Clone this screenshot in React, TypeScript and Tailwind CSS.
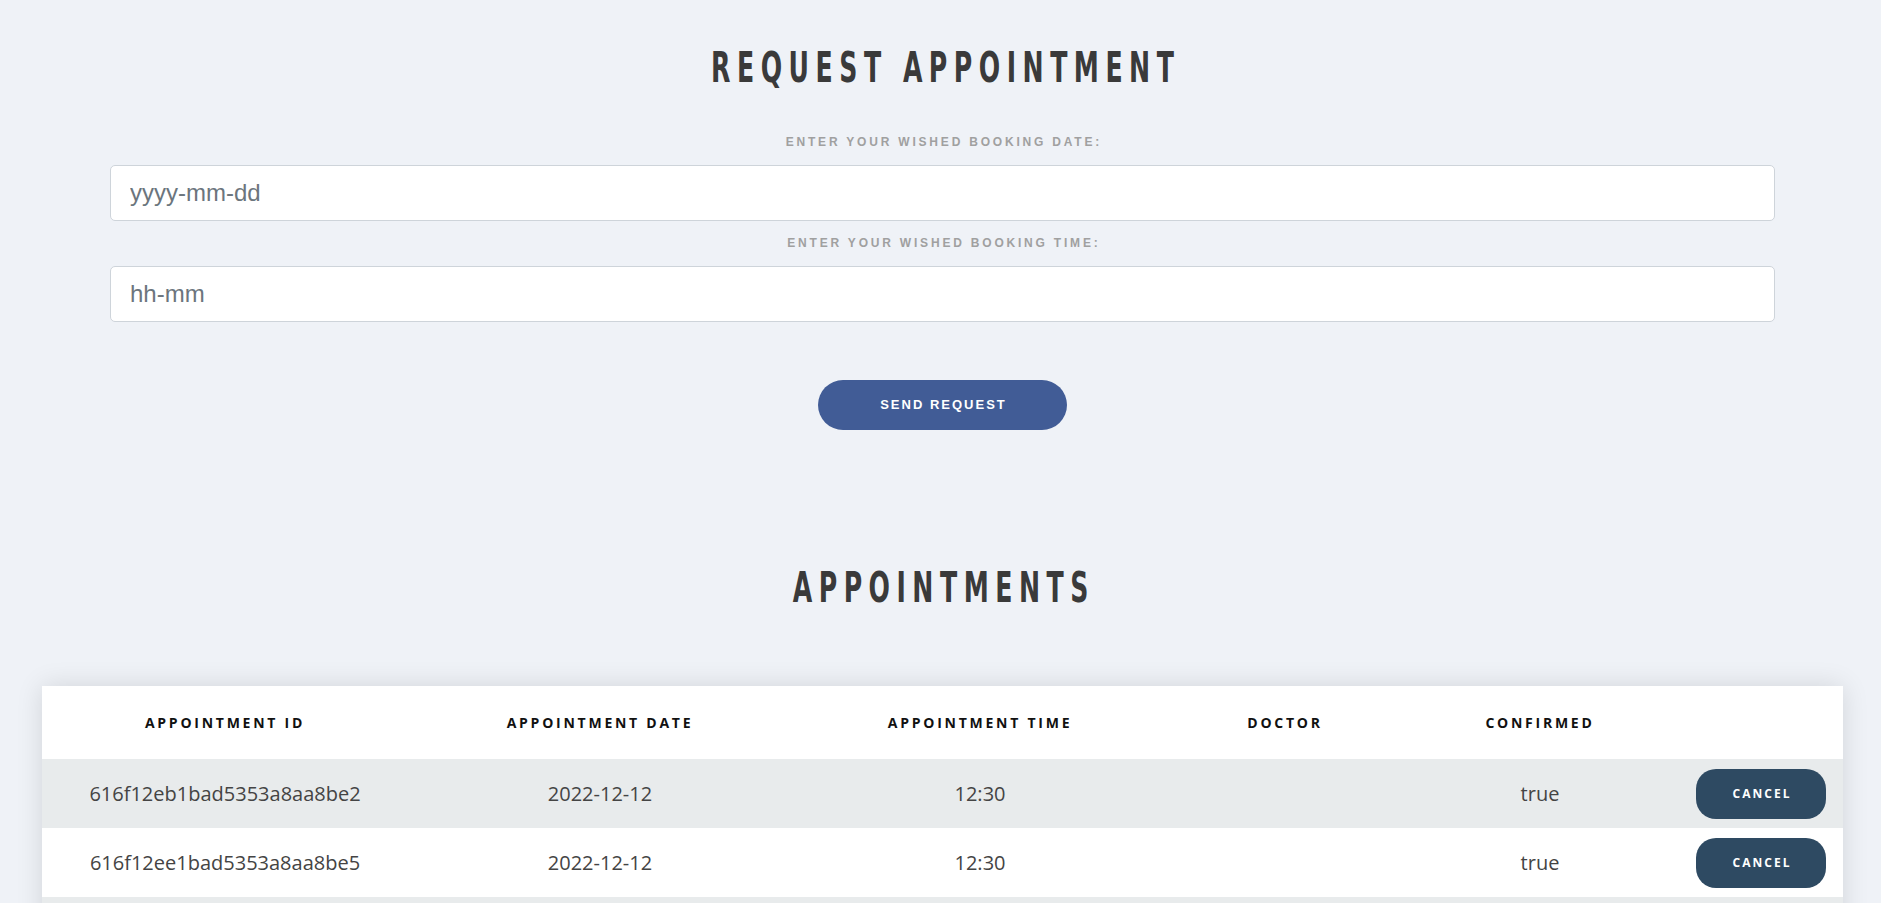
import React from 'react'

type Appointment = {
  id: string
  date: string
  time: string
  doctor: string
  confirmed: boolean
}

const appointments: Appointment[] = [
  { id: '616f12eb1bad5353a8aa8be2', date: '2022-12-12', time: '12:30', doctor: '', confirmed: true },
  { id: '616f12ee1bad5353a8aa8be5', date: '2022-12-12', time: '12:30', doctor: '', confirmed: true },
]

const heading = "font-['DejaVu_Sans_Condensed','Liberation_Sans',sans-serif] font-bold text-[28px] text-[#3a3a3a] uppercase tracking-[6.5px] pl-[6.5px] scale-y-[1.55] h-[56px] leading-[56px] text-center"
const label = "font-['Liberation_Sans',Arial,sans-serif] font-bold text-[12px] tracking-[2.8px] pl-[2.8px] text-[#a0a0a0] uppercase text-center h-[24px] leading-[24px]"
const input = "block w-full h-[56px] bg-white border border-[#ced4da] rounded-[5px] pl-[19px] font-['Liberation_Sans',Arial,sans-serif] text-[24px] text-[#495057] placeholder:text-[#6c757d] outline-none"
const th = "font-['Open_Sans',sans-serif] font-bold text-[14px] tracking-[2.75px] text-[#111] uppercase text-center h-[73px] align-middle"
const td = "font-['Open_Sans',sans-serif] text-[20px] text-[#444] text-center h-[69px] align-middle"

export default function App() {
  return (
    <div className="min-h-[903px] bg-[#eff2f7] pb-[40px]">
      {/* Request form */}
      <div className="pl-[110px] pr-[106px] pt-[40px]">
        <h1 className={heading}>Request Appointment</h1>
        <div className={`${label} mt-[34px]`}>Enter your wished booking date:</div>
        <input className={`${input} mt-[11px]`} placeholder="yyyy-mm-dd" />
        <div className={`${label} mt-[10px]`}>Enter your wished booking time:</div>
        <input className={`${input} mt-[11px]`} placeholder="hh-mm" />
        <div className="flex justify-center mt-[58px]">
          <button className="w-[249px] h-[50px] rounded-full bg-[#415c96] text-white font-['Liberation_Sans',Arial,sans-serif] font-bold text-[13px] tracking-[2px] pl-[2px] uppercase">
            Send Request
          </button>
        </div>
      </div>

      {/* Appointment list */}
      <h2 className={`${heading} mt-[130px]`}>Appointments</h2>
      <div className="ml-[42px] w-[1801px] mt-[70px] bg-white shadow-[0_0_25px_rgba(0,0,0,0.12)]">
        <table className="w-full table-fixed border-collapse">
          <colgroup>
            <col className="w-[366px]" />
            <col className="w-[384px]" />
            <col className="w-[376px]" />
            <col className="w-[234px]" />
            <col className="w-[276px]" />
            <col className="w-[165px]" />
          </colgroup>
          <thead>
            <tr>
              <th className={th}>Appointment ID</th>
              <th className={th}>Appointment Date</th>
              <th className={th}>Appointment Time</th>
              <th className={th}>Doctor</th>
              <th className={th}>Confirmed</th>
              <th className={th}></th>
            </tr>
          </thead>
          <tbody>
            {appointments.map((a, i) => (
              <tr key={a.id} className={i % 2 === 0 ? 'bg-[#e8ebec]' : 'bg-white'}>
                <td className={td}>{a.id}</td>
                <td className={td}>{a.date}</td>
                <td className={td}>{a.time}</td>
                <td className={td}>{a.doctor}</td>
                <td className={td}>{String(a.confirmed)}</td>
                <td className={`${td} text-left`}>
                  <button className="w-[130px] h-[50px] ml-[18px] rounded-[20px] bg-[#2e4a62] text-white font-['Open_Sans',sans-serif] font-bold text-[12px] tracking-[2px] pl-[2px] uppercase">
                    Cancel
                  </button>
                </td>
              </tr>
            ))}
            <tr className="bg-[#e8ebec]">
              <td colSpan={6} className="h-[69px]"></td>
            </tr>
          </tbody>
        </table>
      </div>
    </div>
  )
}
